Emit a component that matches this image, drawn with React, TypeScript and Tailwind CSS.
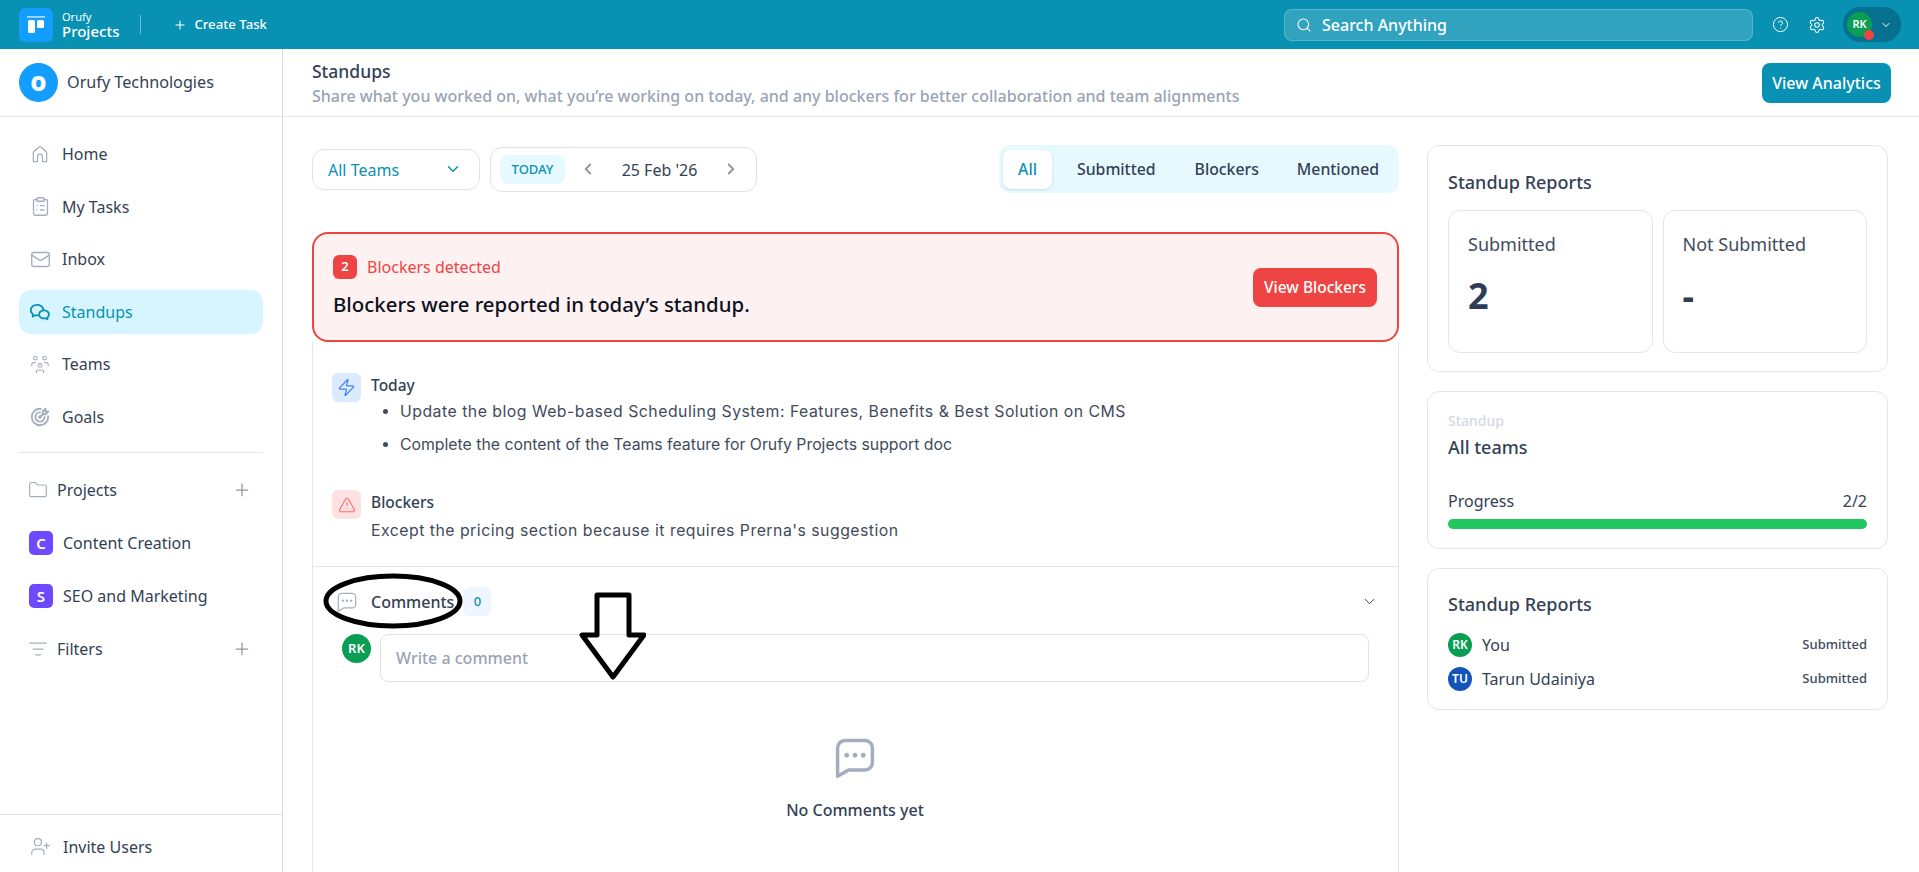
import React from 'react';
import {
  ChevronDown,
  ChevronLeft,
  ChevronRight,
  CircleHelp,
  ClipboardList,
  Folder,
  ListFilter,
  Mail,
  Plus,
  Search,
  Settings,
  TriangleAlert,
  UserPlus,
  Zap,
} from 'lucide-react';
import { RiWechatLine } from 'react-icons/ri';
import { TbTargetArrow, TbUsersGroup } from 'react-icons/tb';

const HomeIcon = ({ className }: { className?: string }) => (
  <svg viewBox="0 0 24 24" fill="none" stroke="currentColor" strokeWidth={1.5} strokeLinejoin="round" className={className}>
    <path d="M4 21V10.500c0-.6.3-1.100.7-1.500l6-5.400a2 2 0 0 1 2.600 0l6 5.400c.4.400.7.900.7 1.500V21h-5v-6a3 3 0 0 0-6 0v6H4Z" />
  </svg>
);

const CommentIcon = ({ className, strokeWidth = 1.5 }: { className?: string; strokeWidth?: number }) => (
  <svg viewBox="0 0 24 24" fill="none" className={className}>
    <path
      d="M2.500 22V6.500a4 4 0 0 1 4-4h11a4 4 0 0 1 4 4v8a4 4 0 0 1-4 4H8.500L2.500 22Z"
      stroke="currentColor"
      strokeWidth={strokeWidth}
      strokeLinejoin="round"
    />
    <circle cx="7.500" cy="10.500" r="1.300" fill="currentColor" />
    <circle cx="12" cy="10.500" r="1.300" fill="currentColor" />
    <circle cx="16.500" cy="10.500" r="1.300" fill="currentColor" />
  </svg>
);

const NavItem = ({ icon, label, active }: { icon: React.ReactNode; label: string; active?: boolean }) => (
  <div className={`flex h-[44px] items-center gap-[11px] rounded-xl pl-[10px] text-[16px] ${active ? 'bg-[#d6f5fe] text-[#0891b2]' : 'text-[#334155]'}`}>
    <span className={`flex w-[22px] justify-center ${active ? 'text-[#0891b2]' : 'text-[#a3adbf]'}`}>{icon}</span>
    <span>{label}</span>
  </div>
);

const SectionRow = ({ icon, label }: { icon: React.ReactNode; label: string }) => (
  <div className="flex h-[44px] items-center pl-[9px] pr-[11px] text-[16px] text-[#334155]">
    <span className="flex w-[20px] justify-center text-[#a3adbf]">{icon}</span>
    <span className="ml-[9px] flex-1">{label}</span>
    <Plus className="h-[20px] w-[20px] text-[#8c96a8]" strokeWidth={1.5} />
  </div>
);

const ProjectRow = ({ letter, label }: { letter: string; label: string }) => (
  <div className="flex h-[44px] items-center gap-[10px] pl-[10px] text-[16px] text-[#334155]">
    <span className="flex h-[24px] w-[24px] items-center justify-center rounded-[5px] bg-[#6d4aff] text-[15px] font-semibold text-white">{letter}</span>
    <span>{label}</span>
  </div>
);

const Sidebar = () => (
  <aside className="flex w-[283px] shrink-0 flex-col border-r border-[#d9dde3] bg-white">
    <div className="flex h-[68px] shrink-0 items-center gap-[9px] border-b border-[#e2e5ea] pl-[19px]">
      <span className="flex h-[39px] w-[39px] items-center justify-center rounded-full bg-[#139dff] pb-[3px] text-[26px] font-extrabold leading-none text-white">o</span>
      <span className="text-[16.200px] text-[#334155]">Orufy Technologies</span>
    </div>
    <nav className="flex flex-1 flex-col px-[19px] pt-[15px]">
      <div className="flex flex-col gap-[8.600px]">
        <NavItem icon={<HomeIcon className="h-[20px] w-[20px]" />} label="Home" />
        <NavItem icon={<ClipboardList className="h-[21px] w-[21px]" strokeWidth={1.5} />} label="My Tasks" />
        <NavItem icon={<Mail className="h-[21px] w-[21px]" strokeWidth={1.5} />} label="Inbox" />
        <NavItem active icon={<RiWechatLine className="h-[24px] w-[24px]" />} label="Standups" />
        <NavItem icon={<TbUsersGroup className="h-[23px] w-[23px]" style={{ strokeWidth: 1.2 }} />} label="Teams" />
        <NavItem icon={<TbTargetArrow className="h-[22px] w-[22px]" />} label="Goals" />
      </div>
      <div className="mt-[13px] border-t border-[#e2e5ea] pt-[15px]">
        <div className="flex flex-col gap-[9px]">
          <SectionRow icon={<Folder className="h-[20px] w-[20px]" strokeWidth={1.4} />} label="Projects" />
          <ProjectRow letter="C" label="Content Creation" />
          <ProjectRow letter="S" label="SEO and Marketing" />
          <SectionRow icon={<ListFilter className="h-[20px] w-[20px]" strokeWidth={1.5} />} label="Filters" />
        </div>
      </div>
    </nav>
    <div className="flex h-[58px] shrink-0 items-center gap-[12px] border-t border-[#e2e5ea] pl-[30px] pt-[6px] text-[16px] text-[#334155]">
      <UserPlus className="h-[21px] w-[21px] text-[#a3adbf]" strokeWidth={1.4} />
      <span>Invite Users</span>
    </div>
  </aside>
);

const Header = () => (
  <header className="flex h-[49px] shrink-0 items-center bg-[#0891b2] pl-[19px] pr-[18px] text-white">
    <span className="flex h-[34px] w-[34px] items-center justify-center rounded-[6px] bg-[#139dff]">
      <svg viewBox="0 0 24 24" className="h-[24px] w-[24px]" fill="white">
        <rect x="3" y="3" width="18" height="1.800" opacity=".6" />
        <rect x="4" y="7" width="7" height="13" rx="1.500" />
        <rect x="13" y="7" width="7" height="8" rx="1.500" />
      </svg>
    </span>
    <div className="ml-[9px] flex flex-col leading-none">
      <span className="text-[11px] leading-[12px]">Orufy</span>
      <span className="text-[15px] font-medium leading-[16px]">Projects</span>
    </div>
    <span className="ml-[21px] h-[19px] w-px bg-white/40" />
    <Plus className="ml-[32px] h-[14px] w-[14px]" strokeWidth={1.8} />
    <span className="ml-[7px] text-[13.200px] font-medium">Create Task</span>
    <div className="ml-auto flex h-[32px] w-[469px] items-center gap-[10px] rounded-lg border border-white/20 bg-white/[0.17] pl-[11px]">
      <Search className="h-[16px] w-[16px]" strokeWidth={1.6} />
      <span className="text-[16px] font-medium">Search Anything</span>
    </div>
    <CircleHelp className="ml-[19px] h-[17px] w-[17px]" strokeWidth={1.4} />
    <Settings className="ml-[19px] h-[18px] w-[18px]" strokeWidth={1.4} />
    <div className="ml-[17px] flex h-[35px] w-[58px] items-center rounded-full bg-[#07708f] pl-[4px]">
      <span className="relative flex h-[25px] w-[25px] items-center justify-center rounded-full bg-[#0a9e54] text-[11px] font-semibold">
        RK
        <span className="absolute -bottom-[3px] right-[-2px] h-[10px] w-[10px] rounded-full bg-[#ef4444]" />
      </span>
      <ChevronDown className="ml-[8px] h-[12px] w-[12px]" strokeWidth={2} />
    </div>
  </header>
);

const TopBar = () => (
  <div className="flex h-[68px] shrink-0 items-center justify-between border-b border-[#e2e5ea] pl-[29px] pr-[28px]">
    <div className="pt-[3px]">
      <div className="text-[17.500px] font-medium leading-[24px] text-[#334155]">Standups</div>
      <div className="text-[16px] font-medium leading-[26px] text-[#9aa3b5]">
        Share what you worked on, what you’re working on today, and any blockers for better collaboration and team alignments
      </div>
    </div>
    <button className="flex h-[40px] w-[129px] items-center justify-center rounded-lg bg-[#0891b2] text-[16px] font-medium text-white">View Analytics</button>
  </div>
);

const FilterBar = () => (
  <div className="flex h-[48px] items-center">
    <div className="flex h-[41px] w-[168px] items-center justify-between rounded-xl border border-[#dfe2e7] pl-[15px] pr-[17px] text-[16px] text-[#0891b2]">
      <span className="pt-[2px]">All Teams</span>
      <ChevronDown className="h-[18px] w-[18px]" strokeWidth={2} />
    </div>
    <div className="ml-[10px] flex h-[45px] w-[267px] items-center rounded-xl border border-[#dfe2e7] pl-[9px] text-[#334155]">
      <span className="flex h-[29px] w-[65px] items-center justify-center rounded-lg bg-[#e5f9fe] pt-[1px] text-[13px] font-medium text-[#0891b2]">TODAY</span>
      <ChevronLeft className="ml-[14px] h-[18px] w-[18px] text-[#8c96a8]" strokeWidth={2.400} />
      <span className="w-[125px] pt-[1px] text-center text-[16px]">25 Feb '26</span>
      <ChevronRight className="h-[18px] w-[18px] text-[#8c96a8]" strokeWidth={2.400} />
    </div>
    <div className="ml-auto flex h-[48px] w-[400px] items-center rounded-xl bg-[#e5f9fe] pl-[4px] text-[15.800px] text-[#334155]">
      <span className="flex h-[39px] w-[49px] items-center justify-center rounded-lg bg-white pt-[2px] font-medium text-[#0891b2] shadow-sm">All</span>
      <span className="ml-[25px] pt-[2px] font-medium">Submitted</span>
      <span className="ml-[39px] pt-[2px] font-medium">Blockers</span>
      <span className="ml-[38px] pt-[2px] font-medium">Mentioned</span>
    </div>
  </div>
);

const BlockerBanner = () => (
  <div className="mt-[39px] flex h-[110px] items-center justify-between rounded-2xl border-2 border-[#ef4444] bg-[#fdf1f1] pl-[19px] pr-[20px]">
    <div>
      <div className="-mt-[1px] flex items-center gap-[10px]">
        <span className="flex h-[24px] w-[24px] items-center justify-center rounded-md bg-[#ef4444] text-[13px] font-semibold text-white">2</span>
        <span className="-mt-[1px] text-[16px] text-[#ef4444]">Blockers detected</span>
      </div>
      <div className="mt-[11px] text-[20.400px] font-medium leading-[28px] text-[#0b1120]">Blockers were reported in today’s standup.</div>
    </div>
    <button className="h-[39px] w-[124px] rounded-lg bg-[#ef4444] pt-[2px] text-[15.500px] font-medium text-white">View Blockers</button>
  </div>
);

const StandupBody = () => (
  <div className="flex-1 border-x border-[#e2e8f0] bg-white">
    <div className="h-[225px] border-b border-[#e2e8f0] pl-[19px] pt-[31px] text-[#414b5c]">
      <div className="flex gap-[10px]">
        <span className="flex h-[29px] w-[29px] shrink-0 items-center justify-center rounded-md bg-[#dbeafe] text-[#3b82f6]">
          <Zap className="h-[19px] w-[19px]" strokeWidth={1.5} />
        </span>
        <div>
          <div className="text-[15.500px] font-medium leading-[24px] text-[#334155]">Today</div>
          <ul className="ml-[29px] mt-[3px] list-disc space-y-[9px] font-['Inter'] text-[15.800px] leading-[24px]">
            <li className="tracking-[0.5px]">Update the blog Web-based Scheduling System: Features, Benefits &amp; Best Solution on CMS</li>
            <li>Complete the content of the Teams feature for Orufy Projects support doc</li>
          </ul>
        </div>
      </div>
      <div className="mt-[33px] flex gap-[10px]">
        <span className="flex h-[29px] w-[29px] shrink-0 items-center justify-center rounded-md bg-[#fee2e2] text-[#f87171]">
          <TriangleAlert className="h-[18px] w-[18px]" strokeWidth={1.5} />
        </span>
        <div>
          <div className="text-[15.500px] font-medium leading-[24px] text-[#334155]">Blockers</div>
          <div className="mt-[5px] font-['Inter'] text-[15.800px] leading-[24px] tracking-[0.5px]">Except the pricing section because it requires Prerna's suggestion</div>
        </div>
      </div>
    </div>
    <div className="relative">
      <div className="flex h-[67px] items-center pb-[17px] pl-[23px] pr-[20px] pt-[19px]">
        <CommentIcon className="h-[22px] w-[22px] text-[#a3adbf]" strokeWidth={1.300} />
        <span className="ml-[13px] text-[16px] font-medium text-[#334155]">Comments</span>
        <span className="ml-[9px] flex h-[29px] w-[28px] items-center justify-center rounded-md bg-[#eff6ff] text-[13px] font-medium text-[#0891b2]">0</span>
        <ChevronDown className="ml-auto h-[17px] w-[17px] text-[#334155]" strokeWidth={1.4} />
      </div>
      <div className="flex gap-[9px] pl-[29px] pr-[29px]">
        <span className="flex h-[29px] w-[29px] shrink-0 items-center justify-center rounded-full bg-[#0a9e54] text-[13px] font-semibold text-white">RK</span>
        <div className="flex h-[48px] flex-1 items-center rounded-lg border border-[#dfe2e7] pl-[15px] text-[16px] font-medium text-[#9aa3b5]">Write a comment</div>
      </div>
      <div className="mt-[54px] flex flex-col items-center pr-[1px]">
        <CommentIcon className="h-[44px] w-[44px] text-[#a3adbf]" strokeWidth={1.900} />
        <span className="mt-[18px] text-[16px] font-medium text-[#334155]">No Comments yet</span>
      </div>
      {/* hand drawn marks on top of the screenshot */}
      <svg className="absolute left-[10px] top-[6px] h-[57px] w-[140px]" viewBox="0 0 140 57" fill="none" stroke="black" strokeWidth={5}>
        <ellipse cx="70" cy="28" rx="67" ry="25" />
      </svg>
      <svg className="absolute left-[266px] top-[25px] h-[88px] w-[67px]" viewBox="0 0 67 88" fill="none" stroke="black" strokeWidth={5} strokeLinejoin="round">
        <path d="M18 3h32v40h15L34 85 3 43h15V3Z" />
      </svg>
    </div>
  </div>
);

const Card = ({ className, children }: { className?: string; children: React.ReactNode }) => (
  <div className={`rounded-xl border border-[#e2e5ea] bg-white px-[20px] ${className ?? ''}`}>{children}</div>
);

const Stat = ({ label, value }: { label: string; value: string }) => (
  <div className="h-[143px] flex-1 rounded-xl border border-[#e2e5ea] pl-[19px] pt-[20px]">
    <div className="text-[18px] leading-[26px] text-[#414b5c]">{label}</div>
    <div className="mt-[17px] text-[36px] font-bold leading-[44px] text-[#2f3c54]">{value}</div>
  </div>
);

const Reporter = ({ initials, name, color }: { initials: string; name: string; color: string }) => (
  <div className="flex h-[24px] items-center">
    <span className={`flex h-[24px] w-[24px] items-center justify-center rounded-full text-[12px] font-semibold text-white ${color}`}>{initials}</span>
    <span className="ml-[10px] flex-1 text-[16px] text-[#334155]">{name}</span>
    <span className="text-[13px] font-medium text-[#414b5c]">Submitted</span>
  </div>
);

const RightColumn = () => (
  <div className="flex w-[461px] shrink-0 flex-col gap-[19px] pt-[28px]">
    <Card className="h-[227px] pt-[22px]">
      <div className="text-[18px] font-medium leading-[28px] text-[#334155]">Standup Reports</div>
      <div className="mt-[14px] flex gap-[10px]">
        <Stat label="Submitted" value="2" />
        <Stat label="Not Submitted" value="-" />
      </div>
    </Card>
    <Card className="h-[158px] pt-[19px]">
      <div className="text-[14px] font-medium leading-[20px] text-[#d5d9e2]">Standup</div>
      <div className="mt-[3px] text-[18px] font-medium leading-[26px] text-[#334155]">All teams</div>
      <div className="mt-[29px] flex justify-between text-[16px] leading-[24px] text-[#334155]">
        <span>Progress</span>
        <span>2/2</span>
      </div>
      <div className="mt-[6px] h-[10px] rounded-full bg-[#22c55e]" />
    </Card>
    <Card className="h-[142px] pt-[22px]">
      <div className="text-[18px] font-medium leading-[26px] text-[#334155]">Standup Reports</div>
      <div className="mt-[16px] flex flex-col gap-[10px]">
        <Reporter initials="RK" name="You" color="bg-[#0a9e54]" />
        <Reporter initials="TU" name="Tarun Udainiya" color="bg-[#1453b8]" />
      </div>
    </Card>
  </div>
);

export default function App() {
  return (
    <div className="flex h-screen flex-col overflow-hidden bg-white font-['Noto_Sans',sans-serif]">
      <Header />
      <div className="flex min-h-0 flex-1">
        <Sidebar />
        <main className="flex min-w-0 flex-1 flex-col">
          <TopBar />
          <div className="flex min-h-0 flex-1 gap-[28px] pl-[29px]">
            <div className="flex w-[1087px] shrink-0 flex-col pt-[28px]">
              <FilterBar />
              <BlockerBanner />
              <StandupBody />
            </div>
            <RightColumn />
          </div>
        </main>
      </div>
    </div>
  );
}
